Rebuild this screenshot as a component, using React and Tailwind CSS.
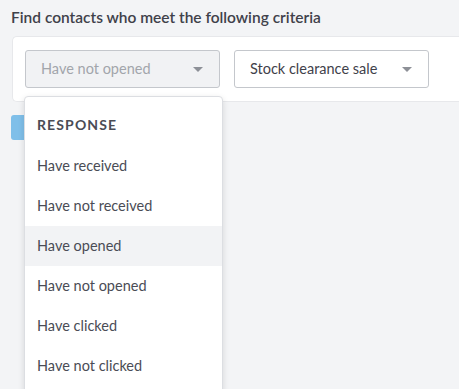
import { useState } from 'react';

const options = [
  'Have received',
  'Have not received',
  'Have opened',
  'Have not opened',
  'Have clicked',
  'Have not clicked',
];

function Caret({ className }) {
  return (
    <svg width="10" height="5" viewBox="0 0 10 5" className={className}>
      <path d="M0 0h10L5 5z" fill="currentColor" />
    </svg>
  );
}

export default function App() {
  const [hover] = useState('Have opened');

  return (
    <div className="h-[389px] w-[459px] overflow-hidden bg-[#f3f4f6] font-['Lato','Liberation_Sans',sans-serif] text-[#4a4c55]">
      <div className="pl-[11px] pt-[7px]">
        <h2 className="text-[15.5px] font-semibold leading-5 text-[#3f414a]">
          Find contacts who meet the following criteria
        </h2>

        <div className="relative mt-[9px]">
          {/* Criteria card */}
          <div className="-mr-4 ml-px flex h-[66px] items-start gap-[14px] rounded-l-[5px] border border-r-0 border-[#e7e8eb] bg-white pl-[12px] pt-[13px]">
            <button className="flex h-[38px] w-[195px] items-center justify-between rounded-[3px] border border-[#c4c7cc] bg-[#f1f2f4] pl-[15px] pr-[16px] text-[14.5px] text-[#a2a5ab]">
              Have not opened
              <Caret className="text-[#8d9097]" />
            </button>
            <button className="flex h-[38px] w-[195px] items-center justify-between rounded-[3px] border border-[#c4c7cc] bg-white pl-[15px] pr-[16px] text-[14.5px] text-[#3f414a]">
              Stock clearance sale
              <Caret className="text-[#8d9097]" />
            </button>
          </div>

          {/* Run button behind the menu */}
          <div className="mt-[13px] h-[25px] w-[60px] rounded-[3px] bg-[#7fbfe9]" />

          {/* Response menu */}
          <div className="absolute left-[13px] top-[60px] w-[199px] rounded-[4px] border border-[#dcdee2] bg-white pb-[12px] shadow-[0_2px_6px_rgba(0,0,0,0.12)]">
            <div className="px-[12px] pt-[18px] pb-[11px] text-[14px] font-bold uppercase leading-5 tracking-[0.08em] text-[#4a4c55]">
              Response
            </div>
            {options.map((o) => (
              <div
                key={o}
                className={`flex h-[40px] items-center px-[12px] text-[14.5px] text-[#4a4c55] ${o === hover ? 'bg-[#f2f3f5]' : ''}`}
              >
                {o}
              </div>
            ))}
          </div>
        </div>
      </div>
    </div>
  );
}
